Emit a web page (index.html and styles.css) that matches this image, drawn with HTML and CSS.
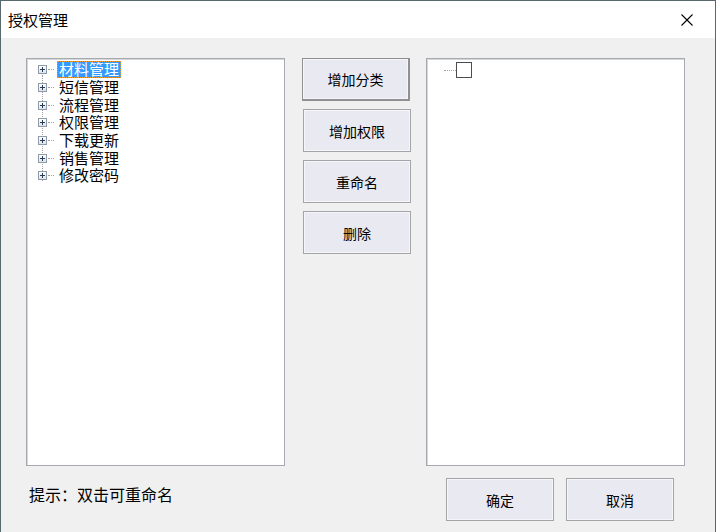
FILE: index.html
```html
<!DOCTYPE html>
<html lang="zh-CN">
<head>
    <meta charset="UTF-8">
    <title>授权管理</title>
    <link rel="stylesheet" href="styles.css">
</head>
<body>
    <div class="window">
        <div class="titlebar">
            <span class="title">授权管理</span>
            <span class="close">
                <svg width="12" height="12" viewBox="0 0 12 12"><path d="M0.5 0.5 L11.5 11.5 M11.5 0.5 L0.5 11.5" stroke="#000" stroke-width="1.1" fill="none"/></svg>
            </span>
        </div>
        <div class="content">
            <div class="row">
                <div class="panel tree">
                    <div class="vline"></div>
                    <div class="node"><span class="plus"></span><span class="dash"></span><span class="label selected">材料管理</span></div>
                    <div class="node"><span class="plus"></span><span class="dash"></span><span class="label">短信管理</span></div>
                    <div class="node"><span class="plus"></span><span class="dash"></span><span class="label">流程管理</span></div>
                    <div class="node"><span class="plus"></span><span class="dash"></span><span class="label">权限管理</span></div>
                    <div class="node"><span class="plus"></span><span class="dash"></span><span class="label">下载更新</span></div>
                    <div class="node"><span class="plus"></span><span class="dash"></span><span class="label">销售管理</span></div>
                    <div class="node"><span class="plus"></span><span class="dash"></span><span class="label">修改密码</span></div>
                </div>
                <div class="actions">
                    <button class="btn first">增加分类</button>
                    <button class="btn">增加权限</button>
                    <button class="btn">重命名</button>
                    <button class="btn">删除</button>
                </div>
                <div class="panel right">
                    <div class="check-node"><span class="dots"></span><span class="box"></span></div>
                </div>
            </div>
            <div class="row bottom">
                <p class="hint">提示：双击可重命名</p>
                <div class="dialog-btns">
                    <button class="btn">确定</button>
                    <button class="btn">取消</button>
                </div>
            </div>
        </div>
    </div>
</body>
</html>
```

FILE: styles.css
```css
* {
    margin: 0;
    padding: 0;
    box-sizing: border-box;
}
body {
    width: 716px;
    height: 532px;
    overflow: hidden;
    font-family: "Noto Sans CJK SC", "Noto Sans", sans-serif;
    background-color: #f0f0f0;
}
.window {
    width: 716px;
    height: 532px;
    border: 1px solid #56696c;
    border-bottom: none;
    background-color: #f0f0f0;
}
.titlebar {
    height: 37px;
    background-color: #ffffff;
    display: flex;
    align-items: center;
    justify-content: space-between;
    padding: 0 22px 0 7px;
}
.title {
    font-size: 15px;
    color: #000;
}
.close {
    display: flex;
    margin-top: 1px;
}
.content {
    padding: 20px 0 0 25px;
}
.row {
    display: flex;
}
.panel {
    width: 259px;
    height: 408px;
    background-color: #ffffff;
    border: 1px solid #a6a9ae;
    box-shadow: inset 1px 1px 0 #d5d7da;
}
.tree {
    position: relative;
    padding-top: 2px;
}
.vline {
    position: absolute;
    left: 15px;
    top: 16px;
    height: 106px;
    border-left: 1px dotted #a0a0a0;
}
.node {
    height: 17.7px;
    display: flex;
    align-items: center;
    padding-left: 11px;
    position: relative;
}
.plus {
    width: 9px;
    height: 9px;
    border: 1px solid #8e9aa8;
    background: linear-gradient(#ffffff, #dfe3e8);
    position: relative;
    flex: none;
}
.plus::before {
    content: "";
    position: absolute;
    left: 1px;
    top: 3px;
    width: 5px;
    height: 1px;
    background-color: #2a3b5a;
}
.plus::after {
    content: "";
    position: absolute;
    left: 3px;
    top: 1px;
    width: 1px;
    height: 5px;
    background-color: #2a3b5a;
}
.dash {
    width: 6px;
    border-top: 1px dotted #a0a0a0;
    margin: 0 3px 0 1px;
}
.label {
    font-family: "Liberation Sans", "Noto Sans CJK SC", sans-serif;
    font-size: 15px;
    line-height: 15px;
    padding: 0 1px;
    color: #000;
    border: 1px solid transparent;
}
.label.selected {
    background-color: #3399ff;
    color: #ffffff;
    border: 1px dotted #f29a2e;
}
.actions {
    display: flex;
    flex-direction: column;
    gap: 8px;
    margin-left: 18px;
    width: 108px;
}
.btn {
    width: 108px;
    height: 43px;
    font-family: "Noto Sans CJK SC", sans-serif;
    font-size: 14px;
    color: #000;
    background-color: #e9e9f1;
    border: 1px solid #a3a3a8;
    box-shadow: inset 0 0 0 1px #f6f6fa;
}
.actions .btn.first {
    margin-left: -1px;
    border-color: #8f8f94;
    border-width: 1px 2px 2px 1px;
}
.right {
    margin-left: 15px;
    padding: 3px 0 0 17px;
}
.check-node {
    display: flex;
    align-items: center;
}
.dots {
    width: 12px;
    border-top: 1px dotted #a0a0a0;
    margin-top: 1px;
}
.box {
    width: 16px;
    height: 16px;
    border: 1px solid #4c4c4c;
    box-shadow: inset 0 0 0 1px #ffffff;
    background-color: #fff;
}
.bottom {
    margin-top: 12px;
    justify-content: space-between;
    width: 648px;
}
.hint {
    font-size: 16px;
    margin: 4px 0 0 3px;
    color: #000;
}
.dialog-btns {
    display: flex;
    gap: 12px;
}
```
